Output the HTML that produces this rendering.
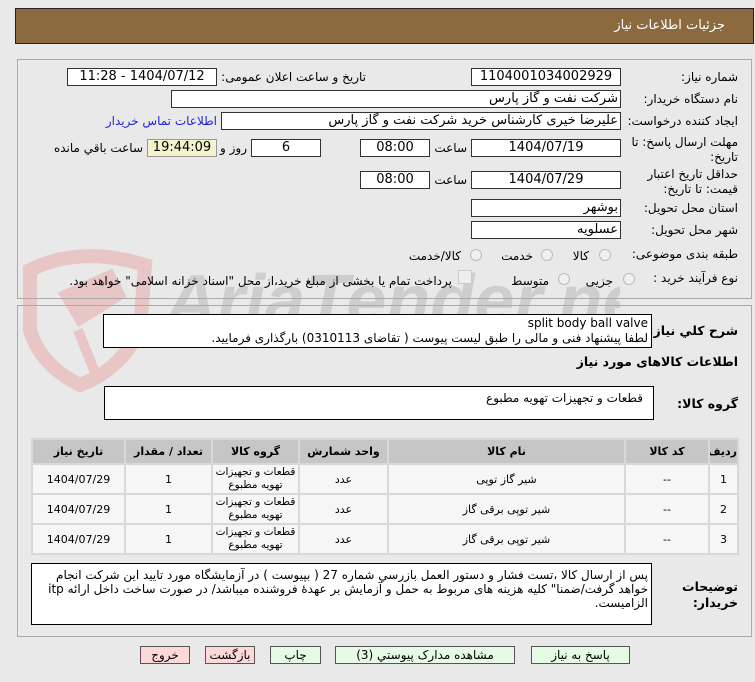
<!DOCTYPE html>
<html><head><meta charset="utf-8"><style>
*{box-sizing:border-box;margin:0;padding:0}
body{width:755px;height:682px;background:#e9e9e9;font-family:"DejaVu Sans","Liberation Sans",sans-serif;font-size:12px;color:#000;position:relative;overflow:hidden}
.a{position:absolute;white-space:nowrap}
.r{direction:rtl;text-align:right}
.box{position:absolute;background:#fff;border:1px solid #333;direction:rtl;text-align:center;line-height:16px;font-size:13px;white-space:nowrap}
.lab{position:absolute;direction:rtl;text-align:right;font-size:12px;white-space:nowrap}
.btn{position:absolute;border:1px solid #555;text-align:center;line-height:16px;font-size:12px;height:18px;background:#e6fbe6;direction:rtl}
table{border-collapse:separate;border-spacing:2px;position:absolute;left:31px;top:438px;width:708px;background:#d8d8d8;table-layout:fixed}
td,th{font-size:11px;text-align:center;direction:rtl;white-space:nowrap;overflow:hidden}
th{background:#c6c6c6;height:23px;font-weight:bold}
td{background:#f6f6f6;height:28px}
td.g{line-height:13px;font-size:10.5px}
.radio{position:absolute;width:12px;height:12px;border-radius:50%;border:1px solid #bbb;background:#f0f0f0}
</style></head><body>
<svg class="a" style="left:0;top:240px" width="620" height="160">
<path d="M30 30 Q80 5 145 25 L140 90 Q120 130 80 145 Q40 125 30 90 Z" fill="none" stroke="#e8c6c6" stroke-width="14"/>
<path d="M65 55 L110 35 L120 55 L80 80 Z M78 90 L98 140" fill="#e8c6c6" stroke="#e8c6c6" stroke-width="10"/>
<text x="165" y="85" font-family="Liberation Sans" font-weight="bold" font-style="italic" font-size="72" fill="#c8c8c8" opacity="0.8">AriaTender.net</text>
</svg>
<div class="a" style="left:15px;top:8px;width:739px;height:36px;background:#8b6a40;border:1px solid #222"></div>
<div class="a r" style="right:30px;top:18px;color:#fff;font-size:13px">جزئیات اطلاعات نیاز</div>
<div class="a" style="left:17px;top:59px;width:735px;height:240px;border:1px solid #aaa"></div>
<div class="a" style="left:17px;top:305px;width:735px;height:332px;border:1px solid #aaa"></div>

<div class="lab" style="right:17px;top:70px">شماره نیاز:</div>
<div class="box" style="left:471px;top:68px;width:150px;height:18px">1104001034002929</div>
<div class="lab" style="right:389px;top:70px">تاریخ و ساعت اعلان عمومی:</div>
<div class="box" style="left:67px;top:68px;width:150px;height:18px">1404/07/12 - 11:28</div>

<div class="lab" style="right:17px;top:92px">نام دستگاه خریدار:</div>
<div class="box" style="left:171px;top:90px;width:450px;height:18px;text-align:right;padding-right:2px">شرکت نفت و گاز پارس</div>

<div class="lab" style="right:17px;top:114px">ایجاد کننده درخواست:</div>
<div class="box" style="left:221px;top:112px;width:400px;height:18px;text-align:right;padding-right:2px">علیرضا  خیری کارشناس خرید  شرکت نفت و گاز پارس</div>
<div class="lab" style="right:538px;top:114px;color:#2222dd">اطلاعات تماس خریدار</div>

<div class="lab" style="right:17px;top:135px;line-height:15px">مهلت ارسال پاسخ: تا<br>تاریخ:</div>
<div class="box" style="left:471px;top:139px;width:150px;height:18px">1404/07/19</div>
<div class="lab" style="right:288px;top:141px">ساعت</div>
<div class="box" style="left:360px;top:139px;width:70px;height:18px">08:00</div>
<div class="box" style="left:251px;top:139px;width:70px;height:18px">6</div>
<div class="lab" style="right:508px;top:141px">روز و</div>
<div class="box" style="left:147px;top:139px;width:70px;height:18px;background:#f4f4cc;border-color:#999">19:44:09</div>
<div class="lab" style="right:612px;top:141px">ساعت باقي مانده</div>

<div class="lab" style="right:17px;top:167px;line-height:15px">حداقل تاریخ اعتبار<br>قیمت: تا تاریخ:</div>
<div class="box" style="left:471px;top:171px;width:150px;height:18px">1404/07/29</div>
<div class="lab" style="right:288px;top:173px">ساعت</div>
<div class="box" style="left:360px;top:171px;width:70px;height:18px">08:00</div>

<div class="lab" style="right:17px;top:201px">استان محل تحویل:</div>
<div class="box" style="left:471px;top:199px;width:150px;height:18px;text-align:right;padding-right:2px">بوشهر</div>
<div class="lab" style="right:17px;top:223px">شهر محل تحویل:</div>
<div class="box" style="left:471px;top:221px;width:150px;height:18px;text-align:right;padding-right:2px">عسلویه</div>

<div class="lab" style="right:17px;top:247px">طبقه بندی موضوعی:</div>
<div class="radio" style="left:599px;top:249px"></div><div class="lab" style="right:166px;top:249px">کالا</div>
<div class="radio" style="left:541px;top:249px"></div><div class="lab" style="right:222px;top:249px">خدمت</div>
<div class="radio" style="left:470px;top:249px"></div><div class="lab" style="right:294px;top:249px">کالا/خدمت</div>

<div class="lab" style="right:17px;top:271px">نوع فرآیند خرید :</div>
<div class="radio" style="left:623px;top:273px"></div><div class="lab" style="right:142px;top:274px">جزیی</div>
<div class="radio" style="left:558px;top:273px"></div><div class="lab" style="right:206px;top:274px">متوسط</div>
<div class="a" style="left:458px;top:270px;width:14px;height:14px;background:#eee;border:1px solid #ccc"></div>
<div class="lab" style="right:303px;top:274px">پرداخت تمام یا بخشی از مبلغ خرید،از محل "اسناد خزانه اسلامی" خواهد بود.</div>

<div class="lab" style="right:17px;top:323px;font-weight:bold;font-size:12.5px">شرح كلي نیاز:</div>
<div class="box" style="left:103px;top:314px;width:549px;height:34px;text-align:right;line-height:15px;padding:1px 3px;font-size:12px;border-color:#000">split body ball valve<br>لطفا پیشنهاد فنی و مالی را طبق لیست پیوست ( تقاضای 0310113) بارگذاری فرمایید.</div>
<div class="lab" style="right:17px;top:354px;font-weight:bold;font-size:12.5px">اطلاعات کالاهای مورد نیاز</div>
<div class="lab" style="right:17px;top:396px;font-weight:bold;font-size:12.5px">گروه کالا:</div>
<div class="box" style="left:104px;top:386px;width:550px;height:34px;text-align:right;line-height:16px;padding:3px 10px;font-size:12px;border-color:#000">قطعات و تجهیزات تهویه مطبوع</div>

<table>
<tr><th style="width:91px">تاریخ نیاز</th><th style="width:85px">تعداد / مقدار</th><th style="width:85px">گروه کالا</th><th style="width:87px">واحد شمارش</th><th>نام کالا</th><th style="width:82px">کد کالا</th><th style="width:27px">ردیف</th></tr>
<tr><td>1404/07/29</td><td>1</td><td class="g">قطعات و تجهیزات<br>تهویه مطبوع</td><td>عدد</td><td>شیر گاز توپی</td><td>--</td><td>1</td></tr>
<tr><td>1404/07/29</td><td>1</td><td class="g">قطعات و تجهیزات<br>تهویه مطبوع</td><td>عدد</td><td>شیر توپی برقی گاز</td><td>--</td><td>2</td></tr>
<tr><td>1404/07/29</td><td>1</td><td class="g">قطعات و تجهیزات<br>تهویه مطبوع</td><td>عدد</td><td>شیر توپی برقی گاز</td><td>--</td><td>3</td></tr>
</table>

<div class="lab" style="right:17px;top:579px;font-weight:bold;line-height:16px;font-size:12.5px">توضیحات<br>خریدار:</div>
<div class="box" style="left:31px;top:563px;width:621px;height:62px;text-align:right;line-height:14px;padding:4px 3px;font-size:12px;border-color:#000;white-space:normal">پس از ارسال کالا ،تست فشار و  دستور العمل بازرسي شماره 27 ( بپیوست ) در آزمایشگاه مورد تایید این شرکت انجام خواهد گرفت/ضمنا" کلیه هزینه های مربوط به حمل و آزمایش بر عهدهٔ فروشنده میباشد/ در صورت ساخت داخل ارائه itp الزامیست.</div>

<div class="btn" style="left:531px;top:646px;width:99px">پاسخ به نیاز</div>
<div class="btn" style="left:335px;top:646px;width:180px">مشاهده مدارک پیوستي (3)</div>
<div class="btn" style="left:270px;top:646px;width:51px">چاپ</div>
<div class="btn" style="left:205px;top:646px;width:50px;background:#fcd9d9">بازگشت</div>
<div class="btn" style="left:140px;top:646px;width:50px;background:#fcd9d9">خروج</div>
</body></html>
